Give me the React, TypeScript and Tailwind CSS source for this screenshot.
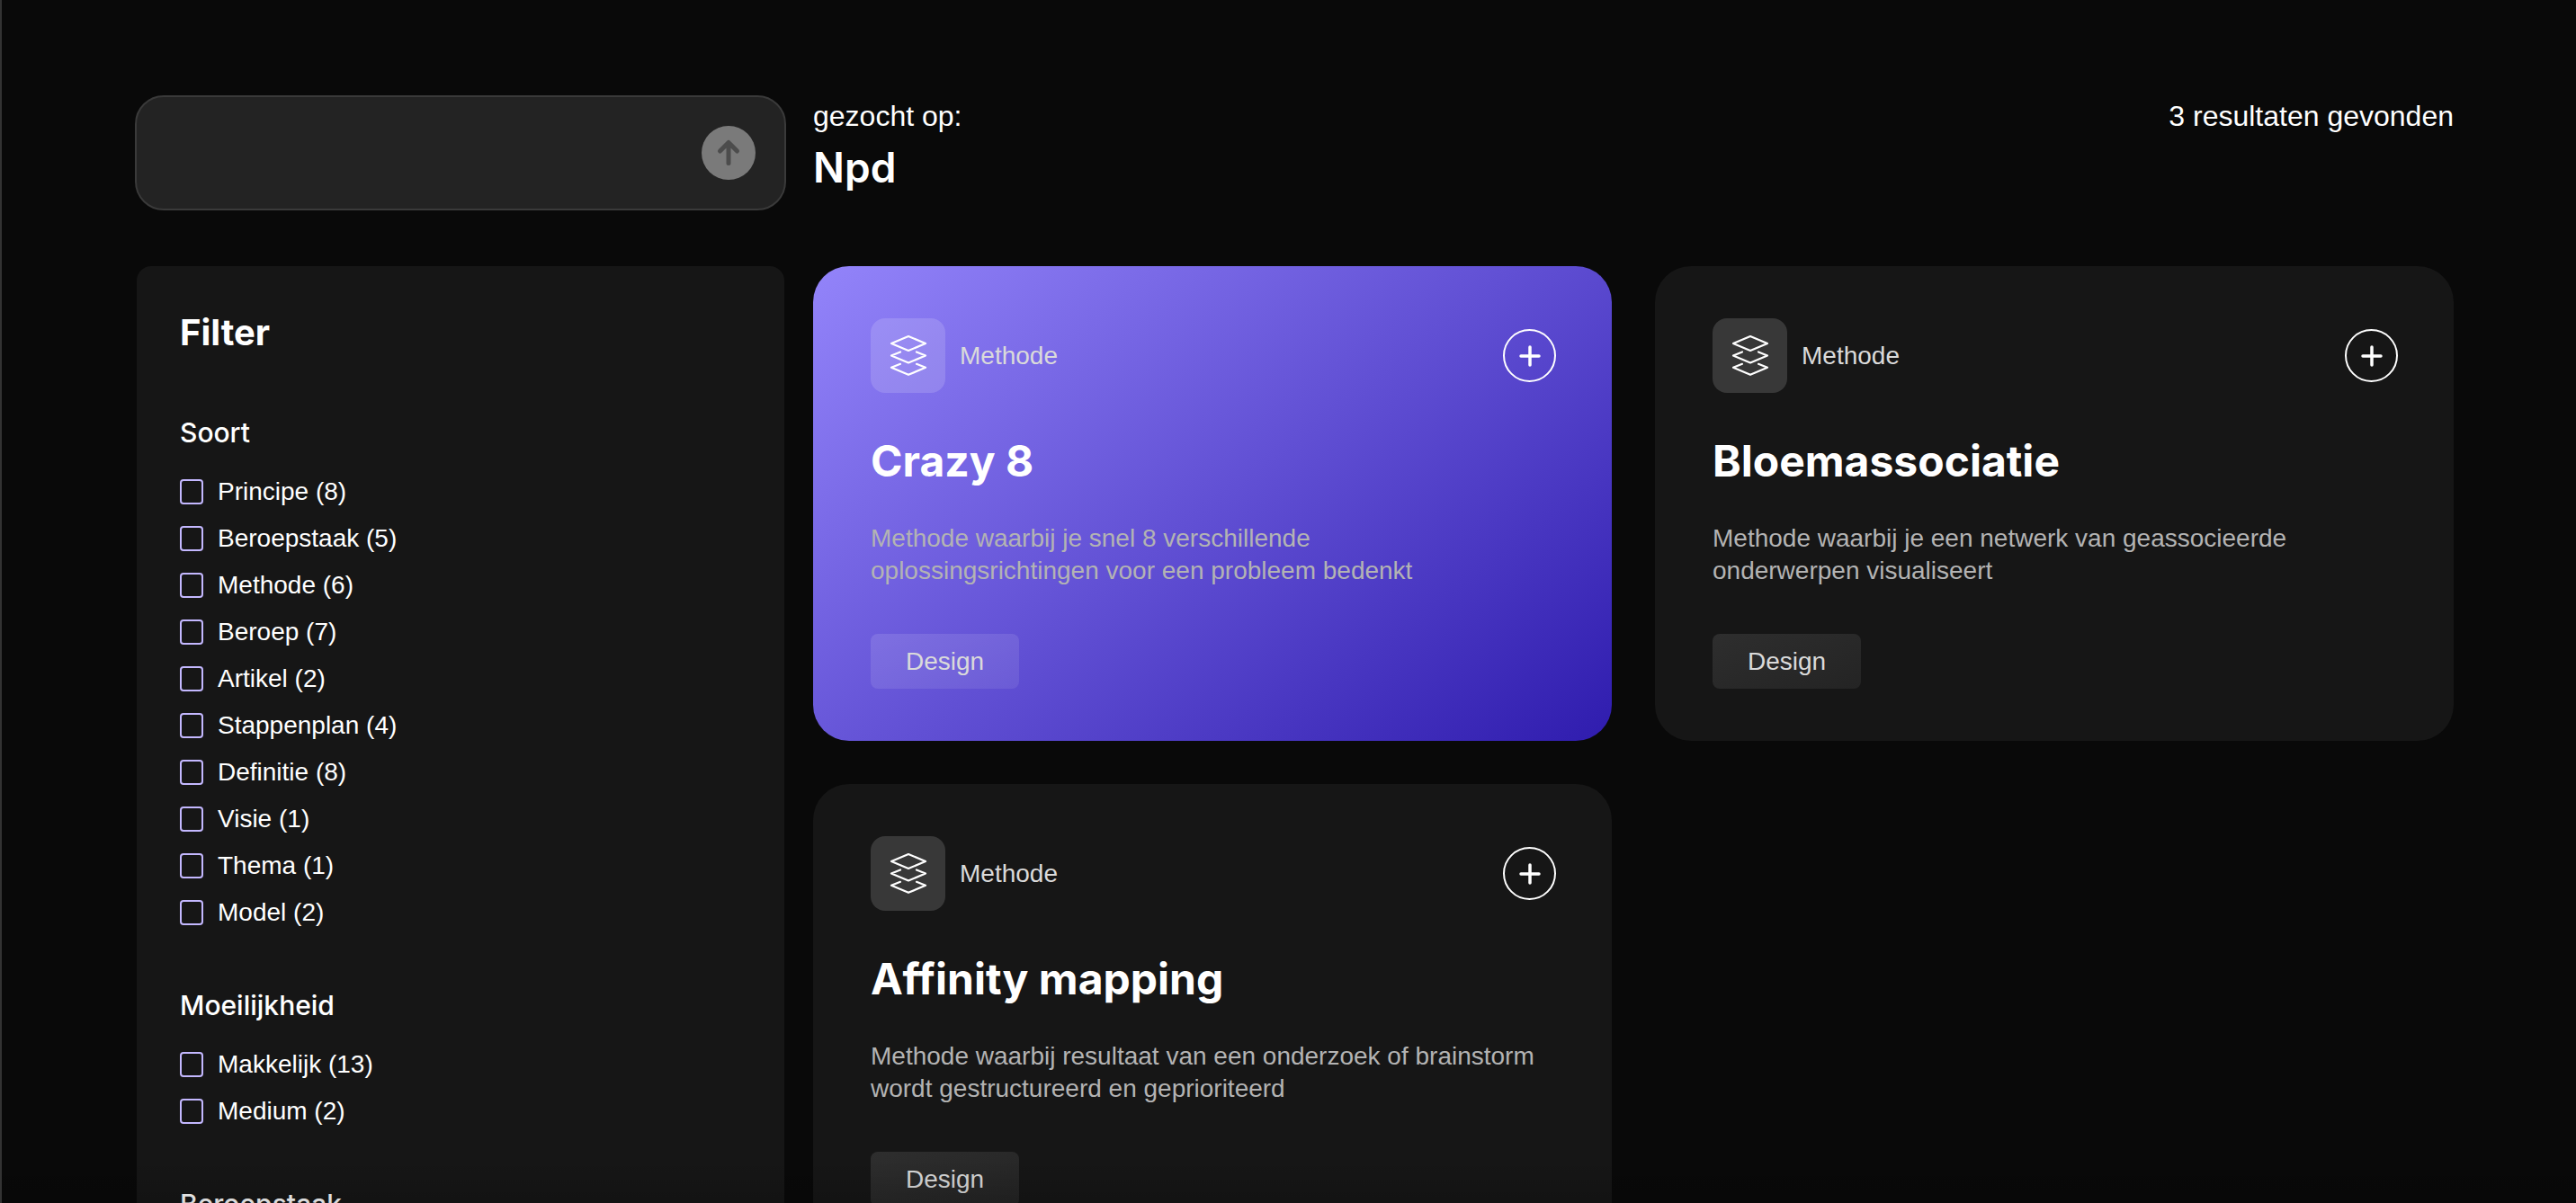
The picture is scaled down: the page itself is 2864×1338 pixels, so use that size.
import React from "react";

type Tool = {
  id: string;
  kind: string;
  title: string;
  text: string;
  tag: string;
  featured?: boolean;
};

const filterGroups = [
  {
    name: "Soort",
    options: [
      ["Principe", 8],
      ["Beroepstaak", 5],
      ["Methode", 6],
      ["Beroep", 7],
      ["Artikel", 2],
      ["Stappenplan", 4],
      ["Definitie", 8],
      ["Visie", 1],
      ["Thema", 1],
      ["Model", 2],
    ],
  },
  {
    name: "Moeilijkheid",
    options: [
      ["Makkelijk", 13],
      ["Medium", 2],
    ],
  },
  { name: "Beroepstaak", options: [] },
];

const tools: Tool[] = [
  {
    id: "crazy-8",
    kind: "Methode",
    title: "Crazy 8",
    text: "Methode waarbij je snel 8 verschillende oplossingsrichtingen voor een probleem bedenkt",
    tag: "Design",
    featured: true,
  },
  {
    id: "bloemassociatie",
    kind: "Methode",
    title: "Bloemassociatie",
    text: "Methode waarbij je een netwerk van geassocieerde onderwerpen visualiseert",
    tag: "Design",
  },
  {
    id: "affinity-mapping",
    kind: "Methode",
    title: "Affinity mapping",
    text: "Methode waarbij resultaat van een onderzoek of brainstorm wordt gestructureerd en geprioriteerd",
    tag: "Design",
  },
];

function LayersIcon() {
  return (
    <svg
      className="h-12 w-12"
      viewBox="0 0 48 48"
      fill="none"
      stroke="currentColor"
      strokeWidth="2.2"
      strokeLinejoin="round"
      strokeLinecap="round"
      aria-hidden="true"
    >
      <path d="M24 2 43 10 24 18 5 10Z" />
      <path d="M15 19.500 5 23.500 24 31.500 43 23.500 33 19.500" />
      <path d="M15 32.800 5 36.800 24 44.800 43 36.800 33 32.800" />
    </svg>
  );
}

function SearchBox() {
  return (
    <form
      className="-mx-0.5 flex h-32 items-center rounded-[32px] border-2 border-[#3a3a3a] bg-[#232323] pr-8 pl-8"
      onSubmit={(e) => e.preventDefault()}
    >
      <input
        type="text"
        aria-label="Zoeken"
        className="min-w-0 flex-1 bg-transparent text-[28px] text-white outline-none"
      />
      <button
        type="submit"
        aria-label="Zoek"
        className="flex size-[60px] items-center justify-center rounded-full bg-[#7a7a7a] text-[#4c4c4c]"
      >
        <svg
          className="size-8"
          viewBox="0 0 32 32"
          fill="none"
          stroke="currentColor"
          strokeWidth="5"
          strokeLinecap="round"
          strokeLinejoin="round"
          aria-hidden="true"
        >
          <path d="M16 27.500V4.500M6.500 14 16 4.500 25.500 14" />
        </svg>
      </button>
    </form>
  );
}

function FilterPanel() {
  return (
    <aside className="rounded-2xl bg-[#161616] px-12 pt-12 pb-12">
      <h2 className="font-[Inter] text-[40px] leading-[52px] font-bold">Filter</h2>
      {filterGroups.map((group) => (
        <fieldset key={group.name} className="mt-[65px]">
          <legend className="font-[Inter] text-[30px] leading-10 font-medium">{group.name}</legend>
          <ul className="mt-7 flex flex-col gap-4">
            {group.options.map(([label, count]) => (
              <li key={label}>
                <label className="flex h-9 items-center gap-4">
                  <input
                    type="checkbox"
                    className="h-7 w-[26px] appearance-none rounded-sm border-2 border-[#c4b8ff] checked:bg-[#c4b8ff]"
                  />
                  <span className="text-[28px] leading-9">
                    {label} ({count})
                  </span>
                </label>
              </li>
            ))}
          </ul>
        </fieldset>
      ))}
    </aside>
  );
}

function ToolCard({ tool }: { tool: Tool }) {
  return (
    <article
      className={
        tool.featured
          ? "flex flex-col items-start rounded-[40px] bg-[linear-gradient(142deg,#9384fa,#2f1cae)] pt-[58px] pr-[62px] pb-[58px] pl-16"
          : "flex flex-col items-start rounded-[40px] bg-[#161616] pt-[58px] pr-[62px] pb-[58px] pl-16"
      }
    >
      <div className="flex w-full items-center gap-4">
        <div
          className={
            tool.featured
              ? "flex size-[83px] items-center justify-center rounded-2xl bg-white/15"
              : "flex size-[83px] items-center justify-center rounded-2xl bg-[#383838]"
          }
        >
          <LayersIcon />
        </div>
        <span className="text-[28px] leading-9 text-[#dadada]">{tool.kind}</span>
        <button
          type="button"
          aria-label={`${tool.title} toevoegen`}
          className="ml-auto flex size-[59px] items-center justify-center rounded-full border-2 border-white"
        >
          <svg className="size-6" viewBox="0 0 24 24" stroke="currentColor" strokeWidth="3.500" strokeLinecap="round" aria-hidden="true">
            <path d="M12 2V22M2 12H22" />
          </svg>
        </button>
      </div>
      <h3 className="mt-11 font-[Inter] text-5xl leading-[64px] font-bold">{tool.title}</h3>
      <p className="mt-9 pr-4 text-[28px] leading-9 text-[#b3b3b3]">{tool.text}</p>
      <span
        className={
          tool.featured
            ? "mt-[52px] flex h-[61px] w-[165px] items-center justify-center rounded-lg bg-linear-to-br from-white/12 to-white/8 text-[28px] text-[#dadada]"
            : "mt-[52px] flex h-[61px] w-[165px] items-center justify-center rounded-lg bg-linear-to-br from-[#2e2e2e] to-[#242424] text-[28px] text-[#dadada]"
        }
      >
        {tool.tag}
      </span>
    </article>
  );
}

export default function App() {
  return (
    <div className="relative h-screen overflow-hidden border-l-2 border-[#333333] bg-[#090909] font-['Liberation_Sans',Arial,sans-serif] text-white">
      <div className="grid grid-cols-[720px_1fr] gap-x-8 pt-[106px] pr-[136px] pl-[150px]">
        <SearchBox />
        <header className="flex items-start justify-between">
          <div>
            <p className="text-[32px] leading-[46px]">gezocht op:</p>
            <h1 className="font-[Inter] text-[46px] leading-[68px] font-semibold">Npd</h1>
          </div>
          <p className="text-[32px] leading-[46px]">3 resultaten gevonden</p>
        </header>
        <div className="mt-[62px]">
          <FilterPanel />
        </div>
        <main className="mt-[62px] grid grid-cols-2 content-start gap-12">
          {tools.map((tool) => (
            <ToolCard key={tool.id} tool={tool} />
          ))}
        </main>
      </div>
      <div className="pointer-events-none absolute inset-x-0 bottom-0 h-12 bg-linear-to-t from-black/15 to-transparent" />
    </div>
  );
}
